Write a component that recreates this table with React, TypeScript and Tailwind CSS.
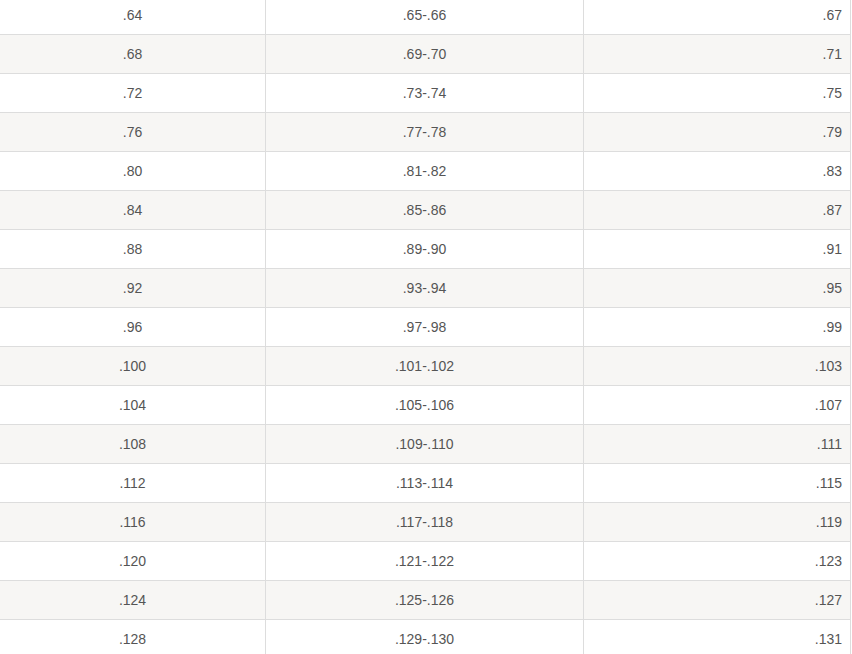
import React from "react";

const rows: [string, string, string][] = [];
for (let n = 64; n <= 128; n += 4) {
  rows.push([`.${n}`, `.${n + 1}-.${n + 2}`, `.${n + 3}`]);
}

export default function App() {
  return (
    <div className="w-[852px] h-[654px] overflow-hidden bg-white" style={{ fontFamily: '"Liberation Sans", Arial, sans-serif' }}>
      <div className="-mt-[4px] w-[851px] text-[14px] text-[#555]">
        {rows.map((r, i) => (
          <div
            key={i}
            className={`grid grid-cols-[266px_318px_267px] h-[39px] border-b border-[#dddddd] ${i % 2 === 1 ? "bg-[#f7f6f4]" : "bg-white"}`}
          >
            <div className="flex items-center justify-center border-r border-[#dddddd]">{r[0]}</div>
            <div className="flex items-center justify-center border-r border-[#dddddd]">{r[1]}</div>
            <div className="flex items-center justify-end pr-[8px] border-r border-[#dddddd]">{r[2]}</div>
          </div>
        ))}
      </div>
    </div>
  );
}
